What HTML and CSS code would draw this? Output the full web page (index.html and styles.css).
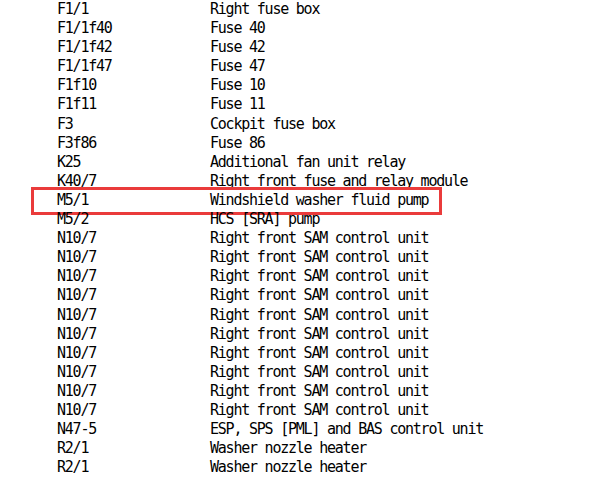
FILE: index.html
```html
<!DOCTYPE html>
<html lang="en">
<head>
    <meta charset="UTF-8">
    <title>Component list</title>
    <link rel="stylesheet" href="styles.css">
</head>
<body>
<div id="parts">
    <div class="row"><span class="code">F1/1</span><span class="desc">Right fuse box</span></div>
    <div class="row"><span class="code">F1/1f40</span><span class="desc">Fuse 40</span></div>
    <div class="row"><span class="code">F1/1f42</span><span class="desc">Fuse 42</span></div>
    <div class="row"><span class="code">F1/1f47</span><span class="desc">Fuse 47</span></div>
    <div class="row"><span class="code">F1f10</span><span class="desc">Fuse 10</span></div>
    <div class="row"><span class="code">F1f11</span><span class="desc">Fuse 11</span></div>
    <div class="row"><span class="code">F3</span><span class="desc">Cockpit fuse box</span></div>
    <div class="row"><span class="code">F3f86</span><span class="desc">Fuse 86</span></div>
    <div class="row"><span class="code">K25</span><span class="desc">Additional fan unit relay</span></div>
    <div class="row"><span class="code">K40/7</span><span class="desc">Right front fuse and relay module</span></div>
    <div class="row marked"><span class="code">M5/1</span><span class="desc">Windshield washer fluid pump</span></div>
    <div class="row"><span class="code">M5/2</span><span class="desc">HCS [SRA] pump</span></div>
    <div class="row"><span class="code">N10/7</span><span class="desc">Right front SAM control unit</span></div>
    <div class="row"><span class="code">N10/7</span><span class="desc">Right front SAM control unit</span></div>
    <div class="row"><span class="code">N10/7</span><span class="desc">Right front SAM control unit</span></div>
    <div class="row"><span class="code">N10/7</span><span class="desc">Right front SAM control unit</span></div>
    <div class="row"><span class="code">N10/7</span><span class="desc">Right front SAM control unit</span></div>
    <div class="row"><span class="code">N10/7</span><span class="desc">Right front SAM control unit</span></div>
    <div class="row"><span class="code">N10/7</span><span class="desc">Right front SAM control unit</span></div>
    <div class="row"><span class="code">N10/7</span><span class="desc">Right front SAM control unit</span></div>
    <div class="row"><span class="code">N10/7</span><span class="desc">Right front SAM control unit</span></div>
    <div class="row"><span class="code">N10/7</span><span class="desc">Right front SAM control unit</span></div>
    <div class="row"><span class="code">N47-5</span><span class="desc">ESP, SPS [PML] and BAS control unit</span></div>
    <div class="row"><span class="code">R2/1</span><span class="desc">Washer nozzle heater</span></div>
    <div class="row"><span class="code">R2/1</span><span class="desc">Washer nozzle heater</span></div>
</div>
</body>
</html>
```

FILE: styles.css
```css
body{
    margin: 0;
    background-color: #fff;
}
#parts{
    font-family: "DejaVu Sans Mono", "Liberation Mono", monospace;
    font-size: 15px;
    letter-spacing: -1.23px;
    color: #000;
}
.row{
    position: relative;
    display: grid;
    grid-template-columns: 153px auto;
    padding-left: 57px;
    height: 19.1px;
    line-height: 19.1px;
    white-space: pre;
}
.marked::after{
    content: "";
    position: absolute;
    left: 31px;
    top: -4px;
    width: 405px;
    height: 22px;
    border: 3px solid #ea3b3b;
}
```
